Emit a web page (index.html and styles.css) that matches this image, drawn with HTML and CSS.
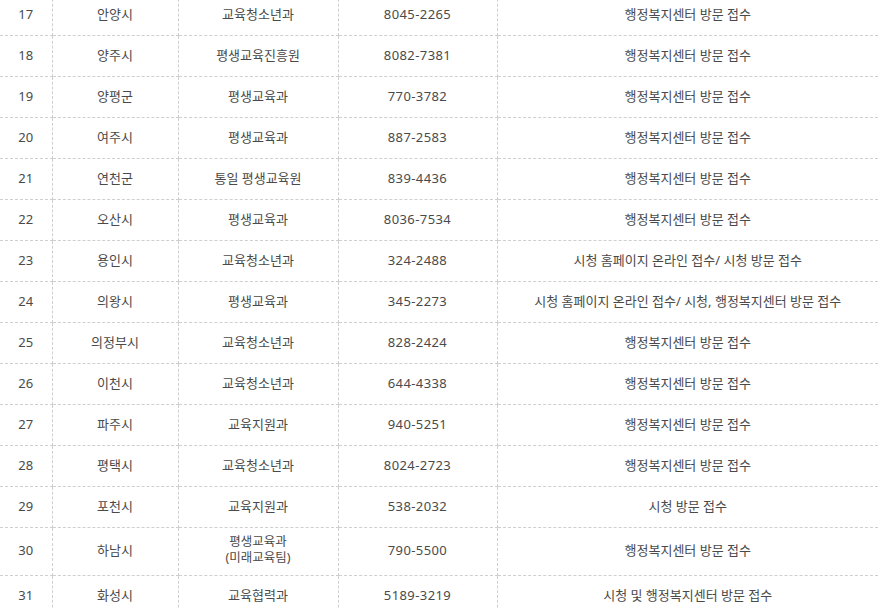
FILE: index.html
```html
<!DOCTYPE html>
<html lang="ko">
<head>
<meta charset="utf-8">
<link rel="stylesheet" href="styles.css">
</head>
<body>
<div class="wrap">
<table class="list">
  <colgroup>
    <col class="c-no"><col class="c-city"><col class="c-dept"><col class="c-tel"><col class="c-how">
  </colgroup>
  <tbody>
    <tr><td>17</td><td>안양시</td><td>교육청소년과</td><td class="num">8045-2265</td><td>행정복지센터 방문 접수</td></tr>
    <tr><td>18</td><td>양주시</td><td>평생교육진흥원</td><td class="num">8082-7381</td><td>행정복지센터 방문 접수</td></tr>
    <tr><td>19</td><td>양평군</td><td>평생교육과</td><td class="num">770-3782</td><td>행정복지센터 방문 접수</td></tr>
    <tr><td>20</td><td>여주시</td><td>평생교육과</td><td class="num">887-2583</td><td>행정복지센터 방문 접수</td></tr>
    <tr><td>21</td><td>연천군</td><td>통일 평생교육원</td><td class="num">839-4436</td><td>행정복지센터 방문 접수</td></tr>
    <tr><td>22</td><td>오산시</td><td>평생교육과</td><td class="num">8036-7534</td><td>행정복지센터 방문 접수</td></tr>
    <tr><td>23</td><td>용인시</td><td>교육청소년과</td><td class="num">324-2488</td><td>시청 홈페이지 온라인 접수/ 시청 방문 접수</td></tr>
    <tr><td>24</td><td>의왕시</td><td>평생교육과</td><td class="num">345-2273</td><td>시청 홈페이지 온라인 접수/ 시청, 행정복지센터 방문 접수</td></tr>
    <tr><td>25</td><td>의정부시</td><td>교육청소년과</td><td class="num">828-2424</td><td>행정복지센터 방문 접수</td></tr>
    <tr><td>26</td><td>이천시</td><td>교육청소년과</td><td class="num">644-4338</td><td>행정복지센터 방문 접수</td></tr>
    <tr><td>27</td><td>파주시</td><td>교육지원과</td><td class="num">940-5251</td><td>행정복지센터 방문 접수</td></tr>
    <tr><td>28</td><td>평택시</td><td>교육청소년과</td><td class="num">8024-2723</td><td>행정복지센터 방문 접수</td></tr>
    <tr><td>29</td><td>포천시</td><td>교육지원과</td><td class="num">538-2032</td><td>시청 방문 접수</td></tr>
    <tr><td>30</td><td>하남시</td><td class="two"><span class="ln">평생교육과</span><span class="ln">(미래교육팀)</span></td><td class="num">790-5500</td><td>행정복지센터 방문 접수</td></tr>
    <tr><td>31</td><td>화성시</td><td>교육협력과</td><td class="num">5189-3219</td><td>시청 및 행정복지센터 방문 접수</td></tr>
  </tbody>
</table>
</div>
</body>
</html>
```
FILE: styles.css
```css
html, body {
  margin: 0;
  padding: 0;
  background: #fff;
}
.wrap {
  margin-top: -6px;
  width: 878px;
  overflow: hidden;
}
.list {
  width: 878px;
  border-collapse: collapse;
  table-layout: fixed;
  font-family: "Noto Sans", "Noto Sans CJK KR", sans-serif;
  font-size: 13px;
  color: #4a4a4a;
}
.c-no { width: 52px; }
.c-city { width: 126px; }
.c-dept { width: 160px; }
.c-tel { width: 159px; }
.c-how { width: 381px; }
.list td {
  height: 25px;
  padding: 6px 0 9px;
  line-height: 16px;
  text-align: center;
  vertical-align: middle;
  border: 1px dashed #cfcfcf;
}
.list td.num {
  letter-spacing: 0.4px;
}
.list td.two {
  font-size: 12.5px;
}
.ln {
  display: block;
  line-height: 16px;
}
.list tr td:first-child { border-left: none; }
.list tr td:last-child { border-right: none; }
```
